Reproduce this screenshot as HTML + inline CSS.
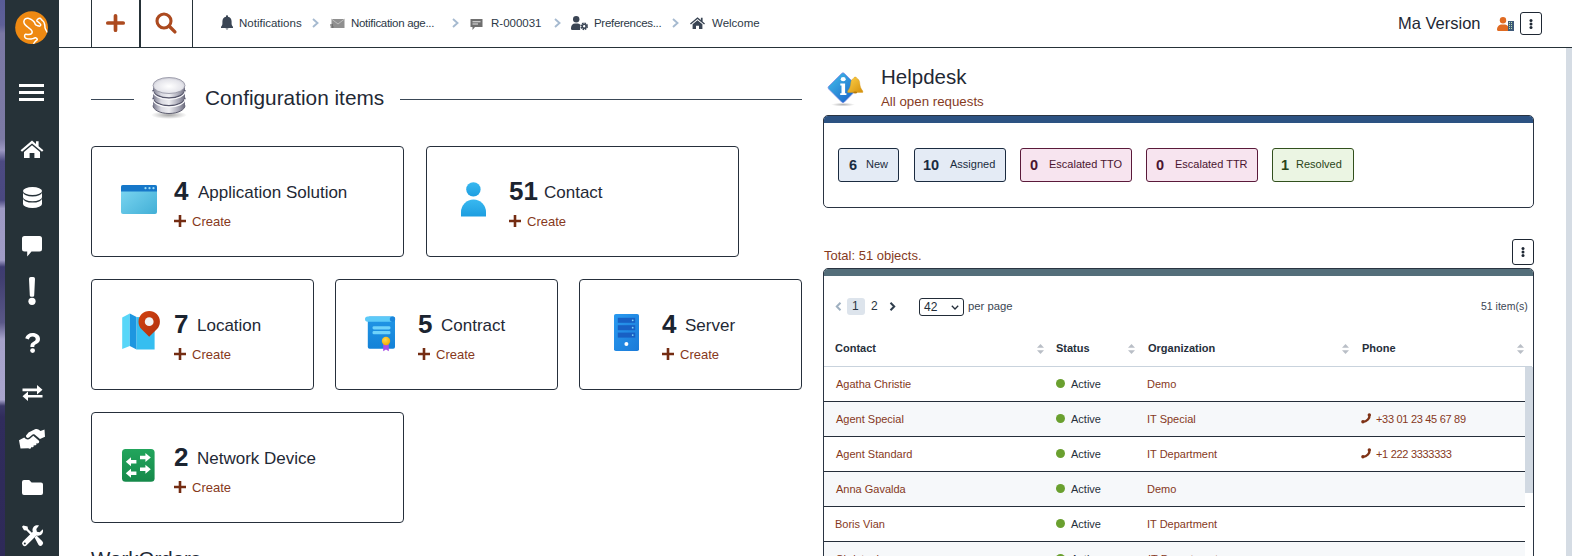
<!DOCTYPE html>
<html><head><meta charset="utf-8"><title>iTop</title>
<style>
html,body{margin:0;padding:0;width:1572px;height:556px;overflow:hidden;background:#fff;font-family:"Liberation Sans", sans-serif}
.t{position:absolute;white-space:nowrap;line-height:1}
svg{display:block}
</style></head><body>
<div style="position:absolute;left:0px;top:0px;width:5px;height:556px;background:linear-gradient(180deg,#585c96 0%,#5e6098 4.5%,#7a78a4 6%,#7c7aa4 25%,#9c98c2 27%,#4c4a82 29%,#4a4880 36%,#9e9ac4 37.5%,#a09cc6 46.8%,#3e3c72 48%,#403e70 50%,#5a5888 58%,#a6a2ca 61%,#aaa6ce 71.9%,#3a3868 73%,#302c5c 75%,#2e2a58 100%)"></div>
<div style="position:absolute;left:5px;top:0px;width:54px;height:556px;background:#263238"></div>
<svg style="position:absolute;left:15px;top:11px;width:33px;height:33px;overflow:visible" viewBox="0 0 33 33"><defs><clipPath id="lc"><circle cx="16.6" cy="16.6" r="16.4"/></clipPath></defs><circle cx="16.6" cy="16.6" r="16.4" fill="#ee8912"/><path clip-path="url(#lc)" d="M18.5 32.9C18.85 32.43 19.97 30.85 20.6 30.1C21.23 29.35 22.30 28.97 22.3 28.4C22.30 27.83 21.23 26.87 20.6 26.7C19.97 26.53 19.42 27.17 18.5 27.4C17.58 27.63 16.35 28.10 15.1 28.1C13.85 28.10 11.92 27.87 11.0 27.4C10.08 26.93 9.67 25.98 9.6 25.3C9.53 24.62 9.92 23.58 10.6 23.3C11.28 23.02 12.72 23.72 13.7 23.6C14.68 23.48 15.93 23.10 16.5 22.6C17.07 22.10 17.22 21.28 17.1 20.6C16.98 19.92 16.58 19.30 15.8 18.5C15.02 17.70 13.43 16.72 12.4 15.8C11.37 14.88 10.18 13.92 9.6 13.0C9.02 12.08 8.78 11.15 8.9 10.3C9.02 9.45 9.62 8.42 10.3 7.9C10.98 7.38 11.97 7.08 13.0 7.2C14.03 7.32 15.47 7.97 16.5 8.6C17.53 9.23 18.52 10.15 19.2 11.0C19.88 11.85 20.03 13.08 20.6 13.7C21.17 14.32 21.92 14.47 22.6 14.7C23.28 14.93 24.18 15.27 24.7 15.1C25.22 14.93 25.82 14.27 25.7 13.7C25.58 13.13 24.63 12.32 24.0 11.7C23.37 11.08 22.13 10.57 21.9 10.0C21.67 9.43 22.08 8.77 22.6 8.3C23.12 7.83 24.32 7.10 25.0 7.2C25.68 7.30 26.07 8.27 26.7 8.9C27.33 9.53 28.28 10.08 28.8 11.0C29.32 11.92 29.58 13.38 29.8 14.4C30.02 15.42 29.82 16.18 30.1 17.1C30.38 18.02 31.10 19.15 31.5 19.9C31.90 20.65 32.33 21.32 32.5 21.6" fill="none" stroke="#fff" stroke-width="1.5" stroke-linejoin="round" stroke-linecap="round"/></svg>
<div style="position:absolute;left:19px;top:84px;width:25px;height:3px;background:#fff"></div>
<div style="position:absolute;left:19px;top:91px;width:25px;height:3px;background:#fff"></div>
<div style="position:absolute;left:19px;top:98px;width:25px;height:3px;background:#fff"></div>
<svg style="position:absolute;left:20px;top:140px;width:24px;height:18px;overflow:visible" viewBox="0 0 24 18"><path d="M12 0.6L0.6 10.2l1.4 1.6L12 3.4l10 8.4l1.4-1.6L18.6 6.2V1.2h-2.6v2.9z" fill="#fff"/><path d="M12 5.2L4 11.9V18h5.6v-5h4.8v5H20v-6.1z" fill="#fff"/></svg>
<svg style="position:absolute;left:22.5px;top:187px;width:19px;height:21px;overflow:visible" viewBox="0 0 19 21"><ellipse cx="9.5" cy="4" rx="9.5" ry="4" fill="#fff"/><path d="M0 5.4A9.5 4 0 0 0 19 5.4V10.2A9.5 4 0 0 1 0 10.2z" fill="#fff"/><path d="M0 11.6A9.5 4 0 0 0 19 11.6V17A9.5 4 0 0 1 0 17z" fill="#fff"/></svg>
<svg style="position:absolute;left:22px;top:236px;width:20px;height:21px;overflow:visible" viewBox="0 0 20 21"><path d="M2.5 0h15A2.5 2.5 0 0 1 20 2.5v10.5a2.5 2.5 0 0 1-2.5 2.5H9.5L5.2 20.6V15.5H2.5A2.5 2.5 0 0 1 0 13V2.5A2.5 2.5 0 0 1 2.5 0z" fill="#fff"/></svg>
<svg style="position:absolute;left:28px;top:277px;width:8px;height:28px;overflow:visible" viewBox="0 0 8 28"><path d="M1 1.8A1.8 1.8 0 0 1 2.8 0h2.4A1.8 1.8 0 0 1 7 1.8L6.2 18.5a1.4 1.4 0 0 1-1.4 1.3H3.2a1.4 1.4 0 0 1-1.4-1.3z" fill="#fff"/><circle cx="4" cy="24.3" r="3.6" fill="#fff"/></svg>
<svg style="position:absolute;left:25px;top:333px;width:15px;height:20px;overflow:visible" viewBox="0 0 15 20"><path d="M7.6 0C3.8 0 1.2 2 0.2 5.2l3.6 1.3C4.4 4.8 5.6 3.6 7.5 3.6c1.9 0 3.2 1 3.2 2.5c0 1.4-1 2.1-2.6 3c-1.6 0.9-2.7 2-2.7 4.1v0.9h3.9v-0.6c0-1.1 0.6-1.6 2-2.4c1.8-1 3.7-2.3 3.7-5.2C15 2.4 11.9 0 7.6 0z" fill="#fff"/><circle cx="7.6" cy="17.6" r="2.4" fill="#fff"/></svg>
<svg style="position:absolute;left:22px;top:384px;width:21px;height:17px;overflow:visible" viewBox="0 0 21 17"><path d="M0.5 4.5h14.5V1l5.5 4.8L15 10.6V7.2H0.5z" fill="#fff"/><path d="M20.5 12.5H6V9l-5.5 4.8L6 18.6v-3.4h14.5z" fill="#fff" transform="translate(0,-1.6)"/></svg>
<svg style="position:absolute;left:19px;top:428px;width:26px;height:22px;overflow:visible" viewBox="0 0 26 22"><path d="M9.5 4.5l6.5-3.2c1.2-0.6 2.4-0.5 3.4 0.2l2.1 1.6L25.5 1.5l0.5 7.2l-5 2.4l-5.4-4.6c-0.6-0.5-1.4-0.5-2 0l-3.6 3c-0.8 0.6-2 0.5-2.6-0.3c-0.6-0.8-0.5-1.9 0.3-2.5z" fill="#fff"/><path d="M0 12.2l5.2-2.6l1.4 1.2c1.3 1.1 3.3 1 4.5-0.2l3.2-2.8l5.4 4.8c0.7 0.7 0.7 1.8 0 2.4c-0.7 0.6-1.7 0.6-2.3 0l-0.6-0.5l0.3 0.3c0.7 0.7 0.6 1.7-0.1 2.3c-0.7 0.6-1.7 0.5-2.3-0.1l-0.2-0.2c0.5 0.7 0.4 1.6-0.3 2.1c-0.7 0.5-1.6 0.4-2.2-0.2c0.3 0.6 0.2 1.3-0.4 1.7c-0.7 0.6-1.7 0.5-2.3-0.1L1.5 20.5z" fill="#fff"/></svg>
<svg style="position:absolute;left:22px;top:480px;width:21px;height:15px;overflow:visible" viewBox="0 0 21 15"><path d="M0 2A2 2 0 0 1 2 0h5.2l2.4 2.4H19A2 2 0 0 1 21 4.4V13a2 2 0 0 1-2 2H2a2 2 0 0 1-2-2z" fill="#fff"/></svg>
<svg style="position:absolute;left:22px;top:525px;width:21px;height:22px;overflow:visible" viewBox="0 0 21 22"><path d="M1.2 0.4L0 1.8l2 3.4l2.4 0.4l4.6 4.6l1.6-1.6L6 4L5.6 1.6z" fill="#fff"/><path d="M17 0.4c-1.8-0.6-3.8-0.2-5.1 1.1c-1.4 1.4-1.8 3.4-1.1 5.2L0.9 16.6a2.6 2.6 0 0 0 3.7 3.7l9.9-9.9c1.8 0.7 3.8 0.3 5.2-1.1c1.3-1.3 1.7-3.3 1.1-5.1l-3.1 3.1l-2.8-0.6l-0.6-2.8z" fill="#fff"/><path d="M12.6 12.4l1.9-1.9l5.8 5.8a2.6 2.6 0 0 1-3.7 3.7z" fill="#fff"/><circle cx="2.8" cy="18.4" r="1" fill="#263238"/></svg>
<div style="position:absolute;left:59px;top:47px;width:1513px;height:1px;background:#263238"></div>
<div style="position:absolute;left:91px;top:0px;width:1px;height:47px;background:#263238"></div>
<div style="position:absolute;left:139px;top:0px;width:2px;height:47px;background:#263238"></div>
<div style="position:absolute;left:192px;top:0px;width:1px;height:47px;background:#263238"></div>
<svg style="position:absolute;left:106px;top:14px;width:19px;height:18px;overflow:visible" viewBox="0 0 19 18"><path d="M9.5 1.8V16.2M1.8 9H17.2" stroke="#ac4a1f" stroke-width="3.7" stroke-linecap="round" fill="none"/></svg>
<svg style="position:absolute;left:155px;top:12px;width:22px;height:22px;overflow:visible" viewBox="0 0 22 22"><circle cx="9" cy="9" r="7" fill="none" stroke="#ac4a1f" stroke-width="3.1"/><path d="M14.3 14.3l5.6 5.6" stroke="#ac4a1f" stroke-width="3.4" stroke-linecap="round"/></svg>
<svg style="position:absolute;left:221px;top:15px;width:12px;height:14px;overflow:visible" viewBox="0 0 12 14"><path d="M6 0.3c0.6 0 1 0.4 1 1v0.5c2.2 0.4 3.6 2.3 3.6 4.6v2.2c0 1.2 0.5 2.3 1.3 3.1l0.1 0.1V13H0v-1.2l0.1-0.1c0.8-0.8 1.3-1.9 1.3-3.1V6.4C1.4 4.1 2.8 2.2 5 1.8V1.3c0-0.6 0.4-1 1-1z" fill="#3a4554"/><path d="M4.4 13.4h3.2L6 14.8z" fill="#3a4554"/></svg>
<div id="bc1" class="t" style="left:239.00px;top:17.50px;font-size:11.5px;font-weight:400;color:#2c3846;">Notifications</div>
<svg style="position:absolute;left:312px;top:18px;width:7px;height:10px;overflow:visible" viewBox="0 0 7 10"><path d="M1 1l4.5 4L1 9" fill="none" stroke="#a6bad0" stroke-width="1.9"/></svg>
<svg style="position:absolute;left:330px;top:19px;width:15px;height:9px;overflow:visible" viewBox="0 0 15 9"><path d="M1.5 0h13v9h-13z" fill="#8f8f8f"/><path d="M1.5 0l6.5 5l6.5-5" fill="none" stroke="#c8c8c8" stroke-width="0.8"/><path d="M0 5.5h3v1H0zM0.5 7.5h3v1h-3z" fill="#555"/></svg>
<div id="bc2" class="t" style="left:351.00px;top:17.50px;font-size:11.5px;font-weight:400;color:#2c3846;letter-spacing:-0.3px;">Notification age...</div>
<svg style="position:absolute;left:452px;top:18px;width:7px;height:10px;overflow:visible" viewBox="0 0 7 10"><path d="M1 1l4.5 4L1 9" fill="none" stroke="#a6bad0" stroke-width="1.9"/></svg>
<svg style="position:absolute;left:470px;top:19px;width:13px;height:11px;overflow:visible" viewBox="0 0 13 11"><path d="M0.5 0h12v8h-7.5L2.5 11V8H0.5z" fill="#6f6f6f"/><path d="M2.5 2.2h8v1.1h-8zM2.5 4.4h5.5v1.1h-5.5z" fill="#e8e8e8"/></svg>
<div id="bc3" class="t" style="left:491.00px;top:17.50px;font-size:11.5px;font-weight:400;color:#2c3846;">R-000031</div>
<svg style="position:absolute;left:554px;top:18px;width:7px;height:10px;overflow:visible" viewBox="0 0 7 10"><path d="M1 1l4.5 4L1 9" fill="none" stroke="#a6bad0" stroke-width="1.9"/></svg>
<svg style="position:absolute;left:571px;top:16px;width:17px;height:14px;overflow:visible" viewBox="0 0 17 14"><circle cx="5.2" cy="3.3" r="3.2" fill="#3a4554"/><path d="M0 12.2c0-2.6 1.8-4.6 4-4.6h2.6c1 0 1.8 0.3 2.5 0.8v5.6H1.2A1.2 1.2 0 0 1 0 12.8z" fill="#3a4554"/><circle cx="13.2" cy="10.3" r="2.7" fill="none" stroke="#3a4554" stroke-width="2.3" stroke-dasharray="1.4 0.7"/><circle cx="13.2" cy="10.3" r="1.9" fill="none" stroke="#3a4554" stroke-width="1.4"/></svg>
<div id="bc4" class="t" style="left:594.00px;top:17.50px;font-size:11.5px;font-weight:400;color:#2c3846;letter-spacing:-0.3px;">Preferences...</div>
<svg style="position:absolute;left:672px;top:18px;width:7px;height:10px;overflow:visible" viewBox="0 0 7 10"><path d="M1 1l4.5 4L1 9" fill="none" stroke="#a6bad0" stroke-width="1.9"/></svg>
<svg style="position:absolute;left:690px;top:17px;width:15px;height:12px;overflow:visible" viewBox="0 0 15 12"><path d="M7.5 0.3L0 6.5l0.9 1L7.5 2l6.6 5.5l0.9-1l-2.4-2V0.8h-1.7v2.3z" fill="#3a4554"/><path d="M7.5 3.2L2.6 7.3V12h3.4V8.8h3V12h3.4V7.3z" fill="#3a4554"/></svg>
<div id="bc5" class="t" style="left:712.00px;top:17.50px;font-size:11.5px;font-weight:400;color:#2c3846;">Welcome</div>
<div id="ver" class="t" style="left:1398.00px;top:14.85px;font-size:16.5px;font-weight:400;color:#1e2733;">Ma Version</div>
<svg style="position:absolute;left:1497px;top:17px;width:18px;height:14px;overflow:visible" viewBox="0 0 18 14"><circle cx="6" cy="3.2" r="3.2" fill="#e06b22"/><path d="M0 12.5c0-2.8 2.1-5 4.6-5h2.8c2.6 0 4.6 2.2 4.6 5v0.3c0 0.7-0.5 1.2-1.2 1.2H1.2C0.5 14 0 13.5 0 12.8z" fill="#e06b22"/><path d="M11 4h6v10h-6z" fill="#3f5a7a"/><path d="M12 5h1v1h-1zM14 5h1v1h-1zM12 7h1v1h-1zM14 7h1v1h-1zM12 9h1v1h-1zM14 9h1v1h-1zM12 11h1v1h-1zM14 11h1v1h-1z" fill="#b8e0a8"/></svg>
<div style="position:absolute;left:1520px;top:12px;width:20px;height:21px;border:1px solid #1e2733;border-radius:3px;background:#fff"></div>
<svg style="position:absolute;left:1528.0px;top:17.5px;width:6px;height:12px;overflow:visible" viewBox="0 0 6 12"><circle cx="3" cy="2.4" r="1.5" fill="#1e2733"/><circle cx="3" cy="6" r="1.5" fill="#1e2733"/><circle cx="3" cy="9.6" r="1.5" fill="#1e2733"/></svg>
<div style="position:absolute;left:91px;top:99px;width:43px;height:1px;background:#3a4756"></div>
<div style="position:absolute;left:400px;top:99px;width:402px;height:1px;background:#3a4756"></div>
<svg style="position:absolute;left:148px;top:76px;width:42px;height:43px;overflow:visible" viewBox="0 0 42 43"><defs><linearGradient id="dbg" x1="0" x2="1"><stop offset="0" stop-color="#77778a"/><stop offset="0.25" stop-color="#d8d8e0"/><stop offset="0.5" stop-color="#eeeef2"/><stop offset="0.8" stop-color="#a8a8b6"/><stop offset="1" stop-color="#6a6a7c"/></linearGradient><radialGradient id="dbt" cx="0.5" cy="0.55" r="0.6"><stop offset="0" stop-color="#ffffff"/><stop offset="0.7" stop-color="#e4e4ea"/><stop offset="1" stop-color="#b8b8c4"/></radialGradient><radialGradient id="dbs" cx="0.5" cy="0.5" r="0.5"><stop offset="0" stop-color="#000" stop-opacity="0.35"/><stop offset="1" stop-color="#000" stop-opacity="0"/></radialGradient></defs><ellipse cx="21" cy="39" rx="18" ry="4" fill="url(#dbs)"/><path d="M5 9.5v20c0 4.4 7.2 8 16 8s16-3.6 16-8v-20z" fill="url(#dbg)"/><path d="M5 14c0 4.4 7.2 8 16 8s16-3.6 16-8" fill="none" stroke="#55556a" stroke-width="1.4"/><path d="M5 21.7c0 4.4 7.2 8 16 8s16-3.6 16-8" fill="none" stroke="#55556a" stroke-width="1.4"/><path d="M5 15.3c0 4.4 7.2 8 16 8s16-3.6 16-8" fill="none" stroke="#fafafc" stroke-width="1.2"/><path d="M5 23c0 4.4 7.2 8 16 8s16-3.6 16-8" fill="none" stroke="#fafafc" stroke-width="1.2"/><path d="M5 29.5c0 4.4 7.2 8 16 8s16-3.6 16-8" fill="none" stroke="#5e5e70" stroke-width="1"/><ellipse cx="21" cy="9.5" rx="16" ry="8" fill="url(#dbt)" stroke="#9a9aa8" stroke-width="0.9"/></svg>
<div id="cfg" class="t" style="left:205.00px;top:88.29px;font-size:20.8px;font-weight:400;color:#1f2935;">Configuration items</div>
<div style="position:absolute;left:91px;top:146px;width:311px;height:109px;border:1px solid #262f3b;border-radius:4px;background:#fff"></div>
<svg style="position:absolute;left:121px;top:185px;width:36px;height:29px;overflow:visible" viewBox="0 0 36 29"><defs><linearGradient id="apg" x1="0" y1="0" x2="1" y2="1"><stop offset="0" stop-color="#7fd8f3"/><stop offset="1" stop-color="#42afd6"/></linearGradient></defs><rect x="0" y="0" width="36" height="29" rx="2" fill="url(#apg)"/><path d="M2 0h32a2 2 0 0 1 2 2v4.5H0V2a2 2 0 0 1 2-2z" fill="#1677c9"/><circle cx="24.5" cy="3.2" r="1.1" fill="#9fe0f7"/><circle cx="28.5" cy="3.2" r="1.1" fill="#9fe0f7"/><circle cx="32.5" cy="3.2" r="1.1" fill="#9fe0f7"/></svg>
<div id="n91_146" class="t" style="left:174.00px;top:178.01px;font-size:26px;font-weight:700;color:#1b2430;">4</div>
<div id="l91_146" class="t" style="left:198.00px;top:183.78px;font-size:17px;font-weight:400;color:#1f2935;">Application Solution</div>
<svg style="position:absolute;left:174px;top:215px;width:12px;height:12px;overflow:visible" viewBox="0 0 12 12"><path d="M4.7 0h2.6v4.7H12v2.6H7.3V12H4.7V7.3H0V4.7h4.7z" fill="#742c12"/></svg>
<div id="c91_146" class="t" style="left:192.00px;top:215.30px;font-size:13px;font-weight:400;color:#86391c;">Create</div>
<div style="position:absolute;left:426px;top:146px;width:311px;height:109px;border:1px solid #262f3b;border-radius:4px;background:#fff"></div>
<svg style="position:absolute;left:461px;top:182px;width:26px;height:35px;overflow:visible" viewBox="0 0 26 35"><defs><linearGradient id="pg" x1="0" y1="0" x2="0" y2="1"><stop offset="0" stop-color="#38b8f0"/><stop offset="1" stop-color="#1e9ee0"/></linearGradient></defs><circle cx="12.4" cy="7.4" r="7.2" fill="url(#pg)"/><path d="M0 34.4V30A12.5 12.5 0 0 1 25 30V34.4z" fill="url(#pg)"/></svg>
<div id="n426_146" class="t" style="left:509.00px;top:178.01px;font-size:26px;font-weight:700;color:#1b2430;">51</div>
<div id="l426_146" class="t" style="left:544.00px;top:183.78px;font-size:17px;font-weight:400;color:#1f2935;">Contact</div>
<svg style="position:absolute;left:509px;top:215px;width:12px;height:12px;overflow:visible" viewBox="0 0 12 12"><path d="M4.7 0h2.6v4.7H12v2.6H7.3V12H4.7V7.3H0V4.7h4.7z" fill="#742c12"/></svg>
<div id="c426_146" class="t" style="left:527.00px;top:215.30px;font-size:13px;font-weight:400;color:#86391c;">Create</div>
<div style="position:absolute;left:91px;top:279px;width:221px;height:109px;border:1px solid #262f3b;border-radius:4px;background:#fff"></div>
<svg style="position:absolute;left:115px;top:305px;width:50px;height:50px;overflow:visible" viewBox="0 0 50 50"><defs><linearGradient id="png" x1="0" y1="0" x2="1" y2="1"><stop offset="0" stop-color="#d2420e"/><stop offset="1" stop-color="#b0300e"/></linearGradient></defs><path d="M7.2 12.6L14.8 8.5V40.9L7.2 44.1z" fill="#58d6f8"/><path d="M14.8 8.5L21.6 12.1V44.5L14.8 40.9z" fill="#1d96e0"/><path d="M21.6 12.1H39.6V44.5H21.6z" fill="#36bef0"/><path d="M34.2 31.8L26.6 24.2A10.7 10.7 0 1 1 41.8 24.2z" fill="url(#png)"/><circle cx="34.2" cy="16.7" r="4.4" fill="#f2f2f2"/></svg>
<div id="n91_279" class="t" style="left:174.00px;top:311.01px;font-size:26px;font-weight:700;color:#1b2430;">7</div>
<div id="l91_279" class="t" style="left:197.00px;top:316.78px;font-size:17px;font-weight:400;color:#1f2935;">Location</div>
<svg style="position:absolute;left:174px;top:348px;width:12px;height:12px;overflow:visible" viewBox="0 0 12 12"><path d="M4.7 0h2.6v4.7H12v2.6H7.3V12H4.7V7.3H0V4.7h4.7z" fill="#742c12"/></svg>
<div id="c91_279" class="t" style="left:192.00px;top:348.30px;font-size:13px;font-weight:400;color:#86391c;">Create</div>
<div style="position:absolute;left:335px;top:279px;width:221px;height:109px;border:1px solid #262f3b;border-radius:4px;background:#fff"></div>
<svg style="position:absolute;left:365px;top:316px;width:31px;height:36px;overflow:visible" viewBox="0 0 31 36"><defs><linearGradient id="ctg" x1="0" y1="0" x2="0" y2="1"><stop offset="0" stop-color="#2196e6"/><stop offset="1" stop-color="#1482d8"/></linearGradient><radialGradient id="mdg" cx="0.4" cy="0.35" r="0.7"><stop offset="0" stop-color="#ffd84a"/><stop offset="1" stop-color="#f0a800"/></radialGradient></defs><rect x="2.8" y="0.5" width="27.2" height="32.2" rx="1.8" fill="url(#ctg)"/><rect x="0" y="0.4" width="28" height="5.4" rx="2.7" fill="#5ccaf8"/><circle cx="27.5" cy="3.1" r="2.7" fill="#1a86dc"/><rect x="7.5" y="10.2" width="18" height="3.2" rx="1.4" fill="#6fd2fa"/><rect x="7.5" y="15.1" width="18" height="3.2" rx="1.4" fill="#6fd2fa"/><path d="M18.2 28h5.6v7.2l-2.8-1.8l-2.8 1.8z" fill="#a64ee6"/><circle cx="21" cy="25" r="4.2" fill="url(#mdg)"/></svg>
<div id="n335_279" class="t" style="left:418.00px;top:311.01px;font-size:26px;font-weight:700;color:#1b2430;">5</div>
<div id="l335_279" class="t" style="left:441.00px;top:316.78px;font-size:17px;font-weight:400;color:#1f2935;">Contract</div>
<svg style="position:absolute;left:418px;top:348px;width:12px;height:12px;overflow:visible" viewBox="0 0 12 12"><path d="M4.7 0h2.6v4.7H12v2.6H7.3V12H4.7V7.3H0V4.7h4.7z" fill="#742c12"/></svg>
<div id="c335_279" class="t" style="left:436.00px;top:348.30px;font-size:13px;font-weight:400;color:#86391c;">Create</div>
<div style="position:absolute;left:579px;top:279px;width:221px;height:109px;border:1px solid #262f3b;border-radius:4px;background:#fff"></div>
<svg style="position:absolute;left:614px;top:314px;width:25px;height:37px;overflow:visible" viewBox="0 0 25 37"><defs><linearGradient id="svg1" x1="0" y1="0" x2="1" y2="1"><stop offset="0" stop-color="#2a9af0"/><stop offset="1" stop-color="#1a7ad8"/></linearGradient></defs><rect x="0" y="0" width="25" height="37" rx="1.8" fill="url(#svg1)"/><rect x="3.8" y="3.8" width="17.4" height="5" fill="#1860c4"/><rect x="3.8" y="11.2" width="17.4" height="5" fill="#1860c4"/><rect x="3.8" y="18.6" width="17.4" height="5" fill="#1860c4"/><circle cx="18.7" cy="6.3" r="0.9" fill="#80d4f8"/><circle cx="18.7" cy="13.7" r="0.9" fill="#80d4f8"/><circle cx="18.7" cy="21.1" r="0.9" fill="#80d4f8"/><circle cx="12.4" cy="30" r="2" fill="#ffffff"/></svg>
<div id="n579_279" class="t" style="left:662.00px;top:311.01px;font-size:26px;font-weight:700;color:#1b2430;">4</div>
<div id="l579_279" class="t" style="left:685.00px;top:316.78px;font-size:17px;font-weight:400;color:#1f2935;">Server</div>
<svg style="position:absolute;left:662px;top:348px;width:12px;height:12px;overflow:visible" viewBox="0 0 12 12"><path d="M4.7 0h2.6v4.7H12v2.6H7.3V12H4.7V7.3H0V4.7h4.7z" fill="#742c12"/></svg>
<div id="c579_279" class="t" style="left:680.00px;top:348.30px;font-size:13px;font-weight:400;color:#86391c;">Create</div>
<div style="position:absolute;left:91px;top:412px;width:311px;height:109px;border:1px solid #262f3b;border-radius:4px;background:#fff"></div>
<svg style="position:absolute;left:122px;top:449px;width:33px;height:33px;overflow:visible" viewBox="0 0 33 33"><defs><linearGradient id="ntg" x1="0" y1="0" x2="0" y2="1"><stop offset="0" stop-color="#22a55c"/><stop offset="1" stop-color="#15894a"/></linearGradient></defs><rect x="0" y="0" width="32.6" height="32.8" rx="3.6" fill="url(#ntg)"/><path d="M18 6.7h5.4V4l5.4 4.5l-5.4 4.5v-2.7H18z" fill="#fff"/><path d="M18 18.4h5.4v-2.7l5.4 4.5l-5.4 4.5v-2.7H18z" fill="#fff"/><path d="M14.4 11h-5.4V8.3l-5.2 4.5l5.2 4.5v-2.7h5.4z" fill="#fff"/><path d="M14.4 22.5h-5.4v-2.7l-5.2 4.5l5.2 4.5v-2.7h5.4z" fill="#fff"/></svg>
<div id="n91_412" class="t" style="left:174.00px;top:444.01px;font-size:26px;font-weight:700;color:#1b2430;">2</div>
<div id="l91_412" class="t" style="left:197.00px;top:449.78px;font-size:17px;font-weight:400;color:#1f2935;">Network Device</div>
<svg style="position:absolute;left:174px;top:481px;width:12px;height:12px;overflow:visible" viewBox="0 0 12 12"><path d="M4.7 0h2.6v4.7H12v2.6H7.3V12H4.7V7.3H0V4.7h4.7z" fill="#742c12"/></svg>
<div id="c91_412" class="t" style="left:192.00px;top:481.30px;font-size:13px;font-weight:400;color:#86391c;">Create</div>
<div id="wo" class="t" style="left:91.00px;top:549.12px;font-size:20.5px;font-weight:400;color:#1f2935;">WorkOrders</div>
<svg style="position:absolute;left:822px;top:66px;width:46px;height:44px;overflow:visible" viewBox="0 0 46 44"><defs><linearGradient id="hdg" x1="0" y1="0" x2="1" y2="1"><stop offset="0" stop-color="#44c2ec"/><stop offset="1" stop-color="#1558c4"/></linearGradient><linearGradient id="bell" x1="0" y1="0" x2="1" y2="1"><stop offset="0" stop-color="#ffd24a"/><stop offset="1" stop-color="#d4900c"/></linearGradient><radialGradient id="hdsh" cx="0.5" cy="0.5" r="0.5"><stop offset="0" stop-color="#000" stop-opacity="0.3"/><stop offset="1" stop-color="#000" stop-opacity="0"/></radialGradient></defs><ellipse cx="21" cy="38.6" rx="12" ry="1.8" fill="url(#hdsh)"/><path d="M19.6 7.4a2 2 0 0 1 2.8 0L35.3 20.3a2 2 0 0 1 0 2.8L22.4 36a2 2 0 0 1-2.8 0L6.7 23.1a2 2 0 0 1 0-2.8z" fill="url(#hdg)" stroke="#7c84e4" stroke-width="0.7"/><ellipse cx="21.2" cy="13.2" rx="2.5" ry="2.1" fill="#fff"/><path d="M18.3 17.6h4.8v9.6h1.3v1.8h-6.2v-1.8h1.3v-7.8h-1.2z" fill="#fff"/><path d="M33.2 11c-0.8 0-1.3 0.5-1.3 1.2c-2 0.6-2.9 2.4-3.1 4.6c-0.3 3.2-0.9 5.8-3.1 8.2v1.4h15.1v-1.4c-2.2-2.4-2.8-5-3.1-8.2c-0.2-2.2-1.1-4-3.1-4.6c0-0.7-0.5-1.2-1.3-1.2z" fill="url(#bell)" stroke="#d69a18" stroke-width="0.4"/><ellipse cx="33.2" cy="26.6" rx="2" ry="1" fill="#b87a0a"/></svg>
<div id="hd" class="t" style="left:881.00px;top:67.32px;font-size:20.5px;font-weight:400;color:#1f2935;">Helpdesk</div>
<div id="hds" class="t" style="left:881.00px;top:95.26px;font-size:13.3px;font-weight:400;color:#853b1e;">All open requests</div>
<div style="position:absolute;left:823px;top:115px;width:709px;height:91px;border:1px solid #2a3442;border-radius:5px;background:#fff"></div>
<div style="position:absolute;left:824px;top:116px;width:709px;height:7px;background:#2c5282;border-radius:4px 4px 0 0"></div>
<div style="position:absolute;left:838px;top:148px;width:59px;height:32px;border:1px solid #1b2b40;border-radius:3px;background:#e4ebf5"></div>
<div id="bn838" class="t" style="left:849.00px;top:158.11px;font-size:14.5px;font-weight:700;color:#1b2b40;">6</div>
<div id="bl838" class="t" style="left:866.00px;top:159.06px;font-size:11px;font-weight:400;color:#1b2b40;">New</div>
<div style="position:absolute;left:914px;top:148px;width:90px;height:32px;border:1px solid #1b2b40;border-radius:3px;background:#e4ebf5"></div>
<div id="bn914" class="t" style="left:923.00px;top:158.11px;font-size:14.5px;font-weight:700;color:#1b2b40;">10</div>
<div id="bl914" class="t" style="left:950.00px;top:159.06px;font-size:11px;font-weight:400;color:#1b2b40;">Assigned</div>
<div style="position:absolute;left:1020px;top:148px;width:110px;height:32px;border:1px solid #5a1a3a;border-radius:3px;background:#f7e4ef"></div>
<div id="bn1020" class="t" style="left:1030.00px;top:158.11px;font-size:14.5px;font-weight:700;color:#4a1530;">0</div>
<div id="bl1020" class="t" style="left:1049.00px;top:159.06px;font-size:11px;font-weight:400;color:#4a1530;">Escalated TTO</div>
<div style="position:absolute;left:1146px;top:148px;width:110px;height:32px;border:1px solid #5a1a3a;border-radius:3px;background:#f7e4ef"></div>
<div id="bn1146" class="t" style="left:1156.00px;top:158.11px;font-size:14.5px;font-weight:700;color:#4a1530;">0</div>
<div id="bl1146" class="t" style="left:1175.00px;top:159.06px;font-size:11px;font-weight:400;color:#4a1530;">Escalated TTR</div>
<div style="position:absolute;left:1272px;top:148px;width:80px;height:32px;border:1px solid #32501d;border-radius:3px;background:#ebf5e3"></div>
<div id="bn1272" class="t" style="left:1281.00px;top:158.11px;font-size:14.5px;font-weight:700;color:#2a4418;">1</div>
<div id="bl1272" class="t" style="left:1296.00px;top:159.06px;font-size:11px;font-weight:400;color:#2a4418;">Resolved</div>
<div id="tot" class="t" style="left:824.00px;top:249.30px;font-size:13px;font-weight:400;color:#853b1e;">Total: 51 objects.</div>
<div style="position:absolute;left:1512px;top:239px;width:20px;height:24px;border:1px solid #1e2733;border-radius:3px;background:#fff"></div>
<svg style="position:absolute;left:1520.0px;top:246.0px;width:6px;height:12px;overflow:visible" viewBox="0 0 6 12"><circle cx="3" cy="2.4" r="1.5" fill="#1e2733"/><circle cx="3" cy="6" r="1.5" fill="#1e2733"/><circle cx="3" cy="9.6" r="1.5" fill="#1e2733"/></svg>
<div style="position:absolute;left:823px;top:268px;width:709px;height:300px;border:1px solid #2a3442;border-radius:5px 5px 0 0;background:#fff"></div>
<div style="position:absolute;left:824px;top:269px;width:709px;height:7px;background:#546e7a;border-radius:4px 4px 0 0"></div>
<svg style="position:absolute;left:835px;top:302px;width:7px;height:9px;overflow:visible" viewBox="0 0 7 9"><path d="M5.5 0.8L1.8 4.5l3.7 3.7" fill="none" stroke="#9fb0c0" stroke-width="2"/></svg>
<div style="position:absolute;left:847px;top:298px;width:18px;height:17px;background:#dde4ec;border-radius:3px"></div>
<div id="pg1" class="t" style="left:852.00px;top:300.43px;font-size:12px;font-weight:400;color:#2a3542;">1</div>
<div id="pg2" class="t" style="left:871.00px;top:300.43px;font-size:12px;font-weight:400;color:#2a3542;">2</div>
<svg style="position:absolute;left:889px;top:302px;width:7px;height:9px;overflow:visible" viewBox="0 0 7 9"><path d="M1.5 0.8l3.7 3.7L1.5 8.2" fill="none" stroke="#2f3d4c" stroke-width="2"/></svg>
<div style="position:absolute;left:919px;top:298px;width:43px;height:16px;border:1px solid #222c38;border-radius:3px;background:#fff"></div>
<div id="sel" class="t" style="left:924.00px;top:301.43px;font-size:12px;font-weight:400;color:#222c38;">42</div>
<svg style="position:absolute;left:951px;top:305px;width:8px;height:5px;overflow:visible" viewBox="0 0 8 5"><path d="M0.8 0.8L4 4l3.2-3.2" fill="none" stroke="#222c38" stroke-width="1.3"/></svg>
<div id="pp" class="t" style="left:968.00px;top:301.03px;font-size:11.3px;font-weight:400;color:#3b4654;">per page</div>
<div id="items" class="t" style="left:1481.00px;top:300.63px;font-size:10.5px;font-weight:400;color:#3b4654;">51 item(s)</div>
<div id="h1" class="t" style="left:835.00px;top:342.56px;font-size:11px;font-weight:700;color:#262f3b;">Contact</div>
<div id="h2" class="t" style="left:1056.00px;top:342.56px;font-size:11px;font-weight:700;color:#262f3b;">Status</div>
<div id="h3" class="t" style="left:1148.00px;top:342.56px;font-size:11px;font-weight:700;color:#262f3b;">Organization</div>
<div id="h4" class="t" style="left:1362.00px;top:342.56px;font-size:11px;font-weight:700;color:#262f3b;">Phone</div>
<svg style="position:absolute;left:1037px;top:344px;width:7px;height:10px;overflow:visible" viewBox="0 0 7 10"><path d="M3.5 0L7 3.8H0z" fill="#b9bec6"/><path d="M3.5 10L7 6.2H0z" fill="#b9bec6"/></svg>
<svg style="position:absolute;left:1128px;top:344px;width:7px;height:10px;overflow:visible" viewBox="0 0 7 10"><path d="M3.5 0L7 3.8H0z" fill="#b9bec6"/><path d="M3.5 10L7 6.2H0z" fill="#b9bec6"/></svg>
<svg style="position:absolute;left:1342px;top:344px;width:7px;height:10px;overflow:visible" viewBox="0 0 7 10"><path d="M3.5 0L7 3.8H0z" fill="#b9bec6"/><path d="M3.5 10L7 6.2H0z" fill="#b9bec6"/></svg>
<svg style="position:absolute;left:1517px;top:344px;width:7px;height:10px;overflow:visible" viewBox="0 0 7 10"><path d="M3.5 0L7 3.8H0z" fill="#b9bec6"/><path d="M3.5 10L7 6.2H0z" fill="#b9bec6"/></svg>
<div style="position:absolute;left:824px;top:366px;width:708px;height:1px;background:#c9d3dd"></div>
<div style="position:absolute;left:824px;top:401px;width:701px;height:1px;background:#252e3a"></div>
<div id="r0a" class="t" style="left:836.00px;top:378.56px;font-size:11px;font-weight:400;color:#86391c;">Agatha Christie</div>
<div style="position:absolute;left:1056px;top:379px;width:9px;height:9px;border-radius:50%;background:#6aa02f"></div>
<div id="r0b" class="t" style="left:1071.00px;top:378.56px;font-size:11px;font-weight:400;color:#262f3b;">Active</div>
<div id="r0c" class="t" style="left:1147.00px;top:378.56px;font-size:11px;font-weight:400;color:#86391c;">Demo</div>
<div style="position:absolute;left:824px;top:402px;width:701px;height:35px;background:#f6f8fa"></div>
<div style="position:absolute;left:824px;top:436px;width:701px;height:1px;background:#252e3a"></div>
<div id="r1a" class="t" style="left:836.00px;top:413.56px;font-size:11px;font-weight:400;color:#86391c;">Agent Special</div>
<div style="position:absolute;left:1056px;top:414px;width:9px;height:9px;border-radius:50%;background:#6aa02f"></div>
<div id="r1b" class="t" style="left:1071.00px;top:413.56px;font-size:11px;font-weight:400;color:#262f3b;">Active</div>
<div id="r1c" class="t" style="left:1147.00px;top:413.56px;font-size:11px;font-weight:400;color:#86391c;">IT Special</div>
<svg style="position:absolute;left:1361px;top:413px;width:11px;height:11px;overflow:visible" viewBox="0 0 11 11"><path d="M8.4 1.6C9 5.2 6.2 8.8 1.6 8.8" fill="none" stroke="#7e3216" stroke-width="2.3"/><ellipse cx="8.3" cy="1.9" rx="1.7" ry="1.6" fill="#7e3216"/><ellipse cx="1.9" cy="8.7" rx="1.7" ry="1.7" fill="#7e3216"/></svg>
<div id="r1d" class="t" style="left:1376.00px;top:413.56px;font-size:11px;font-weight:400;color:#86391c;letter-spacing:-0.3px;">+33 01 23 45 67 89</div>
<div style="position:absolute;left:824px;top:471px;width:701px;height:1px;background:#252e3a"></div>
<div id="r2a" class="t" style="left:836.00px;top:448.56px;font-size:11px;font-weight:400;color:#86391c;">Agent Standard</div>
<div style="position:absolute;left:1056px;top:449px;width:9px;height:9px;border-radius:50%;background:#6aa02f"></div>
<div id="r2b" class="t" style="left:1071.00px;top:448.56px;font-size:11px;font-weight:400;color:#262f3b;">Active</div>
<div id="r2c" class="t" style="left:1147.00px;top:448.56px;font-size:11px;font-weight:400;color:#86391c;">IT Department</div>
<svg style="position:absolute;left:1361px;top:448px;width:11px;height:11px;overflow:visible" viewBox="0 0 11 11"><path d="M8.4 1.6C9 5.2 6.2 8.8 1.6 8.8" fill="none" stroke="#7e3216" stroke-width="2.3"/><ellipse cx="8.3" cy="1.9" rx="1.7" ry="1.6" fill="#7e3216"/><ellipse cx="1.9" cy="8.7" rx="1.7" ry="1.7" fill="#7e3216"/></svg>
<div id="r2d" class="t" style="left:1376.00px;top:448.56px;font-size:11px;font-weight:400;color:#86391c;letter-spacing:-0.3px;">+1 222 3333333</div>
<div style="position:absolute;left:824px;top:472px;width:701px;height:35px;background:#f6f8fa"></div>
<div style="position:absolute;left:824px;top:506px;width:701px;height:1px;background:#252e3a"></div>
<div id="r3a" class="t" style="left:836.00px;top:483.56px;font-size:11px;font-weight:400;color:#86391c;">Anna Gavalda</div>
<div style="position:absolute;left:1056px;top:484px;width:9px;height:9px;border-radius:50%;background:#6aa02f"></div>
<div id="r3b" class="t" style="left:1071.00px;top:483.56px;font-size:11px;font-weight:400;color:#262f3b;">Active</div>
<div id="r3c" class="t" style="left:1147.00px;top:483.56px;font-size:11px;font-weight:400;color:#86391c;">Demo</div>
<div style="position:absolute;left:824px;top:541px;width:701px;height:1px;background:#252e3a"></div>
<div id="r4a" class="t" style="left:835.00px;top:518.56px;font-size:11px;font-weight:400;color:#86391c;">Boris Vian</div>
<div style="position:absolute;left:1056px;top:519px;width:9px;height:9px;border-radius:50%;background:#6aa02f"></div>
<div id="r4b" class="t" style="left:1071.00px;top:518.56px;font-size:11px;font-weight:400;color:#262f3b;">Active</div>
<div id="r4c" class="t" style="left:1147.00px;top:518.56px;font-size:11px;font-weight:400;color:#86391c;">IT Department</div>
<div style="position:absolute;left:824px;top:542px;width:701px;height:35px;background:#f6f8fa"></div>
<div style="position:absolute;left:824px;top:576px;width:701px;height:1px;background:#252e3a"></div>
<div id="r5a" class="t" style="left:835.50px;top:553.56px;font-size:11px;font-weight:400;color:#86391c;">Christophe</div>
<div style="position:absolute;left:1056px;top:554px;width:9px;height:9px;border-radius:50%;background:#6aa02f"></div>
<div id="r5b" class="t" style="left:1071.00px;top:553.56px;font-size:11px;font-weight:400;color:#262f3b;">Active</div>
<div id="r5c" class="t" style="left:1148.00px;top:553.56px;font-size:11px;font-weight:400;color:#86391c;">IT Department</div>
<div style="position:absolute;left:1525px;top:367px;width:8px;height:126px;background:#d1d9e2"></div>
<div style="position:absolute;left:1566px;top:48px;width:6px;height:508px;background:#d5dce4"></div>
</body></html>
